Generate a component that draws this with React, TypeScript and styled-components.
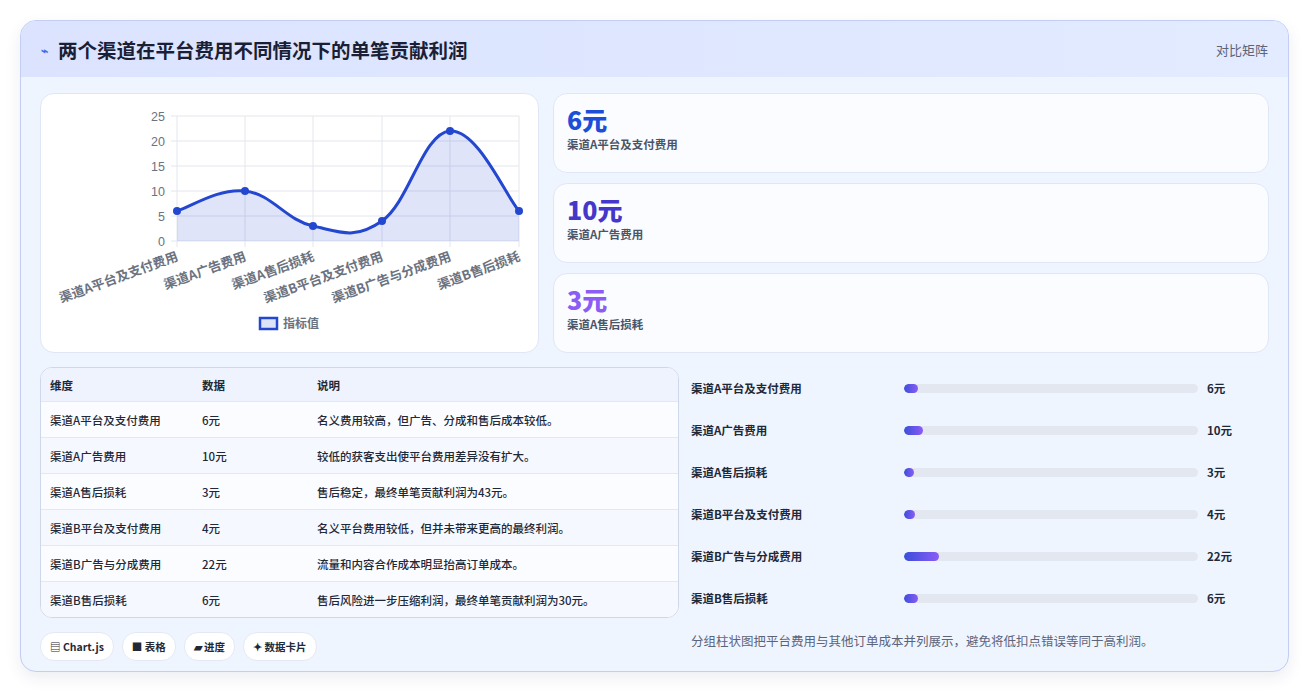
import React from "react";
import styled, { createGlobalStyle } from "styled-components";

const G = createGlobalStyle`
  body{margin:0;background:#fff;font-family:"Noto Sans CJK SC","Noto Sans",sans-serif;}
`;
const Page = styled.div`padding:20px;height:693px;box-sizing:border-box;`;
const Card = styled.div`
  border:1px solid #c3cdf5;border-radius:16px;overflow:hidden;height:652px;box-sizing:border-box;
  background:#eff5ff;box-shadow:0 6px 16px rgba(30,40,90,.08);
`;
const Header = styled.div`
  height:56px;display:flex;align-items:center;justify-content:space-between;padding:0 20px;
  background:linear-gradient(90deg,#dbe3ff,#e2ebff);
`;
const Title = styled.div`display:flex;align-items:center;gap:10px;font-size:19.5px;font-weight:700;color:#1a1f36;`;
const Tag = styled.div`font-size:13px;color:#5b6478;`;
const Body = styled.div`padding:16px 19px;display:flex;flex-direction:column;gap:14px;`;
const Top = styled.div`display:grid;grid-template-columns:499px 1fr;column-gap:14px;`;
const Bottom = styled.div`display:grid;grid-template-columns:639px 1fr;column-gap:12px;`;
const Panel = styled.div`background:#fff;border:1px solid #dfe6f5;border-radius:14px;`;
const ChartPanel = styled(Panel)`height:260px;box-sizing:border-box;`;
const Stats = styled.div`display:flex;flex-direction:column;gap:10px;`;
const Stat = styled(Panel)`height:80px;box-sizing:border-box;padding:9px 13px;background:#fbfcff;`;
const Big = styled.div<{ c: string }>`font-size:25px;font-weight:800;color:${p => p.c};line-height:32px;`;
const Small = styled.div`font-size:11.5px;color:#4b5568;font-weight:600;margin-top:1px;`;
const Table = styled.div`border:1px solid #cfd8ea;border-radius:12px;overflow:hidden;background:#fff;`;
const Row = styled.div<{ h?: boolean; alt?: boolean }>`
  display:grid;grid-template-columns:152px 115px 1fr;padding:0 9px;align-items:center;white-space:nowrap;
  height:${p => (p.h ? 33 : 35)}px;font-size:11.5px;color:#1f2937;
  background:${p => (p.h ? "#eef3fd" : p.alt ? "#f5f8fe" : "#fbfcff")};
  border-top:${p => (p.h ? "none" : "1px solid #e3e9f4")};
  font-weight:${p => (p.h ? 700 : 500)};
`;
const Bars = styled.div`display:flex;flex-direction:column;`;
const BarRow = styled.div`display:grid;grid-template-columns:213px 294px 1fr;align-items:center;height:42px;font-size:11.5px;font-weight:700;color:#1f2937;`;
const Track = styled.div`height:9px;border-radius:5px;background:#e3e8f0;overflow:hidden;`;
const Fill = styled.div`height:100%;border-radius:5px;background:linear-gradient(90deg,#3b4fd9,#8b5cf6);`;
const Val = styled.div`padding-left:9px;`;
const Chips = styled.div`display:flex;gap:8px;margin-top:14px;`;
const Chip = styled.div`height:27px;padding:0 9px;border-radius:14px;background:#fff;border:1px solid #e3e8f3;font-size:10.5px;font-weight:600;color:#1f2937;display:flex;align-items:center;gap:3px;`;
const Note = styled.div`font-size:12.5px;color:#5b6478;padding-top:12px;`;

const data = [
  ["渠道A平台及支付费用", 6, "名义费用较高，但广告、分成和售后成本较低。"],
  ["渠道A广告费用", 10, "较低的获客支出使平台费用差异没有扩大。"],
  ["渠道A售后损耗", 3, "售后稳定，最终单笔贡献利润为43元。"],
  ["渠道B平台及支付费用", 4, "名义平台费用较低，但并未带来更高的最终利润。"],
  ["渠道B广告与分成费用", 22, "流量和内容合作成本明显抬高订单成本。"],
  ["渠道B售后损耗", 6, "售后风险进一步压缩利润，最终单笔贡献利润为30元。"],
] as const;

const Chart = () => {
  const xs = [136, 204, 272, 341, 409, 478];
  const y = (v: number) => 147 - v * 5;
  const pts = data.map((d, i) => [xs[i], y(d[1] as number)]);
  let path = `M${pts[0][0]},${pts[0][1]}`;
  for (let i = 0; i < pts.length - 1; i++) {
    const p0 = pts[Math.max(0, i - 1)], p1 = pts[i], p2 = pts[i + 1], p3 = pts[Math.min(pts.length - 1, i + 2)];
    const t = 0.2;
    path += ` C${p1[0] + (p2[0] - p0[0]) * t},${p1[1] + (p2[1] - p0[1]) * t} ${p2[0] - (p3[0] - p1[0]) * t},${p2[1] - (p3[1] - p1[1]) * t} ${p2[0]},${p2[1]}`;
  }
  return (
    <svg width="497" height="258" style={{ display: "block" }}>
      {[0, 5, 10, 15, 20, 25].map(v => (
        <g key={v}>
          <line x1={130} x2={478} y1={y(v)} y2={y(v)} stroke="#e2e6ee" />
          <text x={124} y={y(v) + 4.5} fontSize="12.5" fill="#6b7280" textAnchor="end" fontFamily="Liberation Sans">{v}</text>
        </g>
      ))}
      {xs.map(x => <line key={x} x1={x} x2={x} y1={22} y2={153} stroke="#e2e6ee" />)}
      <path d={`${path} L478,147 L136,147 Z`} fill="rgba(37,71,208,0.15)" />
      <path d={path} fill="none" stroke="#2447cf" strokeWidth="3" />
      {pts.map((p, i) => <circle key={i} cx={p[0]} cy={p[1]} r="4" fill="#2447cf" />)}
      {data.map((d, i) => (
        <text key={i} transform={`translate(${xs[i] + 2},${166}) rotate(-20)`} textAnchor="end" fontSize="13" fontWeight="700" fill="#6b7280" fontFamily="Noto Sans CJK SC">{d[0]}</text>
      ))}
      <rect x="219" y="224" width="17" height="11" fill="#dde4f7" stroke="#2447cf" strokeWidth="2.5" />
      <text x="242" y="234" fontSize="12" fill="#6b7280" fontWeight="700" fontFamily="Noto Sans CJK SC">指标值</text>
    </svg>
  );
};

export default function App() {
  return (
    <Page>
      <G />
      <Card>
        <Header>
          <Title><span style={{ color: "#3f6ee8", fontSize: 12 }}>⌁</span>两个渠道在平台费用不同情况下的单笔贡献利润</Title>
          <Tag>对比矩阵</Tag>
        </Header>
        <Body>
          <Top>
            <ChartPanel><Chart /></ChartPanel>
            <Stats>
              <Stat><Big c="#1d4ed8">6元</Big><Small>渠道A平台及支付费用</Small></Stat>
              <Stat><Big c="#4338ca">10元</Big><Small>渠道A广告费用</Small></Stat>
              <Stat><Big c="#8b5cf6">3元</Big><Small>渠道A售后损耗</Small></Stat>
            </Stats>
          </Top>
          <Bottom>
            <div>
              <Table>
                <Row h><span>维度</span><span>数据</span><span>说明</span></Row>
                {data.map((d, i) => (
                  <Row key={i} alt={i % 2 === 1}><span>{d[0]}</span><span>{d[1]}元</span><span>{d[2]}</span></Row>
                ))}
              </Table>
              <Chips>
                <Chip>▤ Chart.js</Chip><Chip>■ 表格</Chip><Chip>▰ 进度</Chip><Chip>✦ 数据卡片</Chip>
              </Chips>
            </div>
            <div>
              <Bars>
                {data.map((d, i) => (
                  <BarRow key={i}>
                    <span>{d[0]}</span>
                    <Track><Fill style={{ width: `${(6 + (d[1] as number) * 1.3) / 294 * 100}%` }} /></Track>
                    <Val>{d[1]}元</Val>
                  </BarRow>
                ))}
              </Bars>
              <Note>分组柱状图把平台费用与其他订单成本并列展示，避免将低扣点错误等同于高利润。</Note>
            </div>
          </Bottom>
        </Body>
      </Card>
    </Page>
  );
}
